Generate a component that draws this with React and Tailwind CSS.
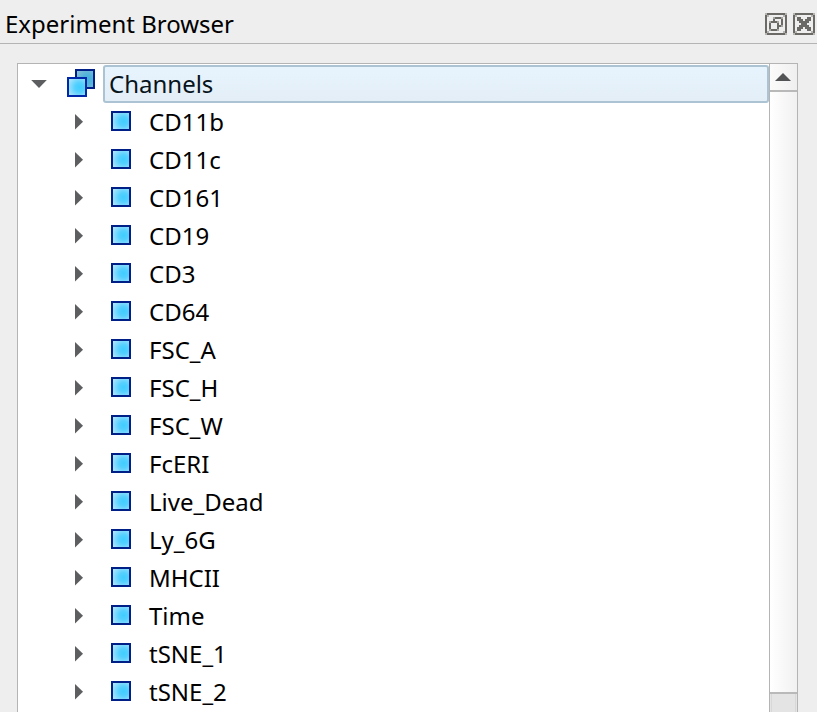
const channels = [
  'CD11b', 'CD11c', 'CD161', 'CD19', 'CD3', 'CD64', 'FSC_A', 'FSC_H',
  'FSC_W', 'FcERI', 'Live_Dead', 'Ly_6G', 'MHCII', 'Time', 'tSNE_1', 'tSNE_2',
];

function Gradients() {
  return (
    <svg width="0" height="0" className="absolute">
      <defs>
        <radialGradient id="cell" cx="0.64" cy="0.52" r="0.72">
          <stop offset="0" stopColor="#3fcdff" />
          <stop offset="0.35" stopColor="#54d0ff" />
          <stop offset="1" stopColor="#b4e6fb" />
        </radialGradient>
        <radialGradient id="cellBack" cx="0.64" cy="0.52" r="0.72">
          <stop offset="0" stopColor="#42b3dd" />
          <stop offset="0.35" stopColor="#50b3da" />
          <stop offset="1" stopColor="#8abfd6" />
        </radialGradient>
      </defs>
    </svg>
  );
}

function ChannelIcon() {
  return (
    <svg width="20" height="20" viewBox="0 0 20 20" className="mb-[2px] shrink-0">
      <rect x="1" y="1" width="18" height="18" fill="url(#cell)" stroke="#001f87" strokeWidth="2" />
    </svg>
  );
}

function GroupIcon() {
  return (
    <svg width="28" height="28" viewBox="0 0 28 28" className="mb-[2px] shrink-0">
      <rect x="9" y="1" width="18" height="18" fill="url(#cellBack)" stroke="#001f87" strokeWidth="2" />
      <rect x="1" y="9" width="18" height="18" fill="url(#cell)" stroke="#0028a8" strokeWidth="2" />
    </svg>
  );
}

function ButtonFrame({ children }) {
  return (
    <svg width="22" height="22" viewBox="0 0 11 11" fill="#6b6a66" shapeRendering="crispEdges">
      <path d="M1 0H10V1H1zM1 10H10V11H1zM0 1H1V10H0zM10 1H11V10H10z" />
      <path d="M0 0h1v1h-1zM10 0h1v1h-1zM0 10h1v1h-1zM10 10h1v1h-1zM1 1h1v1h-1zM9 1h1v1h-1zM1 9h1v1h-1zM9 9h1v1h-1z" fill="#b5b4b1" />
      {children}
    </svg>
  );
}

function FloatButton() {
  return (
    <ButtonFrame>
      <path d="M5 2H8V3H5zM8 3H9V6H8zM4 3H5V4H4zM3 4H6V5H3zM2 5H3V8H2zM3 8H6V9H3zM6 5H7V8H6zM7 6H8V7H7z" />
      <path d="M4 2h1v1h-1zM8 2h1v1h-1zM2 4h1v1h-1zM6 4h1v1h-1zM2 8h1v1h-1zM6 8h1v1h-1zM8 6h1v1h-1z" fill="#a5a4a1" />
    </ButtonFrame>
  );
}

function CloseButton() {
  return (
    <ButtonFrame>
      <path d="M2 2H4V3H2zM7 2H9V3H7zM2 3H5V4H2zM6 3H9V4H6zM3 4H8V5H3zM4 5H7V6H4zM3 6H8V7H3zM2 7H5V8H2zM6 7H9V8H6zM2 8H4V9H2zM7 8H9V9H7z" />
    </ButtonFrame>
  );
}

function ChannelRow({ name }) {
  return (
    <div className="flex h-[38px] items-center pl-[57px]">
      <svg width="8" height="16" viewBox="0 0 8 16" className="mr-7 shrink-0">
        <path d="M0 0L8 7.75L0 15.5Z" fill="#5c5e60" />
      </svg>
      <ChannelIcon />
      <span className="ml-[18px] leading-[38px]">{name}</span>
    </div>
  );
}

export default function App() {
  return (
    <div className="flex h-[712px] w-[817px] flex-col overflow-hidden bg-[#eeeeee] font-['Noto_Sans',sans-serif] text-[24px] text-black">
      <Gradients />
      <header className="flex h-11 shrink-0 justify-between border-b border-[#b4b4b4] pr-[2px] pl-[5px]">
        <h1 className="pt-[5px] leading-[38px] font-normal">Experiment Browser</h1>
        <div className="flex gap-[6px] pt-[13px]">
          <FloatButton />
          <CloseButton />
        </div>
      </header>
      <main className="mt-[19px] mr-[19px] ml-[17px] flex min-h-0 flex-1 border border-b-0 border-[#b4b4b4] bg-white">
        <div className="min-w-0 flex-1 pt-px">
          <div className="flex h-[38px] items-center pl-[13px]">
            <svg width="16" height="8" viewBox="0 0 16 8" className="mr-5 shrink-0">
              <path d="M0.2 0H15.8L8 8Z" fill="#5c5e60" />
            </svg>
            <GroupIcon />
            <div className="ml-2 h-[38px] flex-1 rounded-[3px] border-2 border-[#abc3d3] bg-linear-to-b from-[#e8f4fd] to-[#e3eef7] pl-1 leading-[34px] text-[#07141c]">Channels</div>
          </div>
          {channels.map((name) => <ChannelRow key={name} name={name} />)}
        </div>
        <div className="flex w-7 shrink-0 flex-col border-l border-[#b4b4b4]">
          <div className="flex h-7 shrink-0 items-center justify-center border-b-2 border-[#b9b9b9] bg-linear-to-r from-[#fbfbfb] to-[#efefef] pr-px">
            <svg width="16" height="8" viewBox="0 0 16 8">
              <path d="M0 8H16L8 0Z" fill="#515354" />
            </svg>
          </div>
          <div className="flex-1 bg-linear-to-r from-white to-[#f1f1f1]" />
          <div className="h-5 shrink-0 border-t-2 border-[#b9b9b9] bg-[#e4e4e4] px-px">
            <div className="h-full border-x border-[#d8d8d8]" />
          </div>
        </div>
      </main>
    </div>
  );
}
